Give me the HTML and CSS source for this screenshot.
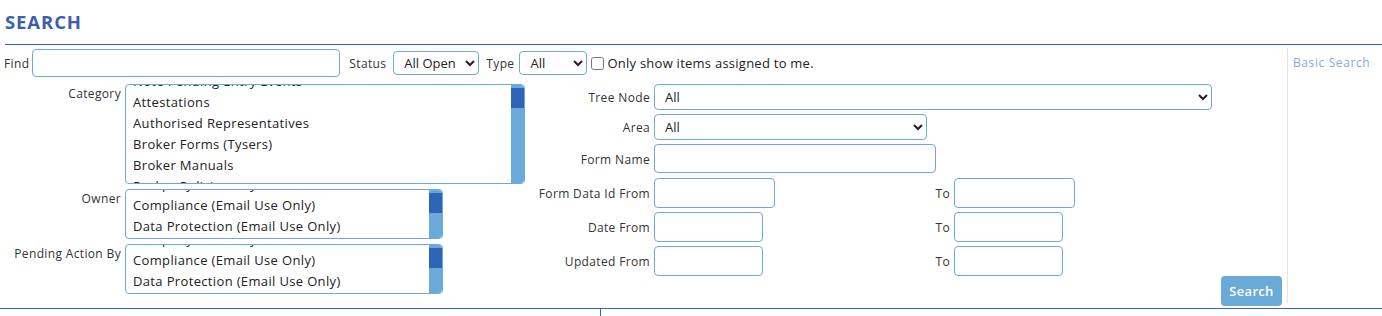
FILE: index.html
```html
<!DOCTYPE html>
<html lang="en">
<head>
  <meta charset="UTF-8" />
  <title>Search</title>
  <link rel="stylesheet" href="styles.css">
</head>
<body>
  <!-- Header -->
  <h1 class="page-title">SEARCH</h1>

  <div class="search-wrap">
    <!-- Search form -->
    <form class="search-form">
      <div class="top-row">
        <label class="lbl">Find</label>
        <input type="text" class="fld find-box" />
        <label class="lbl status-lbl">Status</label>
        <select class="fld sel status-sel"><option>All Open</option></select>
        <label class="lbl type-lbl">Type</label>
        <select class="fld sel type-sel"><option>All</option></select>
        <input type="checkbox" class="chk" />
        <span class="chk-text">Only show items assigned to me.</span>
      </div>

      <div class="body-cols">
        <!-- Left: list boxes -->
        <div class="left-col">
          <div class="list-row">
            <label class="lbl side-lbl">Category</label>
            <div class="listbox cat-box">
              <ul class="items" style="margin-top:-14px">
                <li>Note Pending Entry Events</li>
                <li>Attestations</li>
                <li>Authorised Representatives</li>
                <li>Broker Forms (Tysers)</li>
                <li>Broker Manuals</li>
                <li>Broker Policies</li>
              </ul>
              <div class="scroll"><div class="thumb"></div></div>
            </div>
          </div>
          <div class="list-row">
            <label class="lbl side-lbl">Owner</label>
            <div class="listbox small-box">
              <ul class="items" style="margin-top:-16px">
                <li>Company Secretary</li>
                <li>Compliance (Email Use Only)</li>
                <li>Data Protection (Email Use Only)</li>
              </ul>
              <div class="scroll"><div class="thumb"></div></div>
            </div>
          </div>
          <div class="list-row">
            <label class="lbl side-lbl">Pending Action By</label>
            <div class="listbox small-box">
              <ul class="items" style="margin-top:-16px">
                <li>Company Secretary</li>
                <li>Compliance (Email Use Only)</li>
                <li>Data Protection (Email Use Only)</li>
              </ul>
              <div class="scroll"><div class="thumb"></div></div>
            </div>
          </div>
        </div>

        <!-- Right: fields -->
        <div class="right-col">
          <div class="field-grid">
            <label class="lbl">Tree Node</label>
            <select class="fld sel tree-sel span3"><option>All</option></select>

            <label class="lbl">Area</label>
            <select class="fld sel area-sel span3"><option>All</option></select>

            <label class="lbl">Form Name</label>
            <input type="text" class="fld name-box span3" />

            <label class="lbl">Form Data Id From</label>
            <div class="cell"><input type="text" class="fld id-box" /></div>
            <label class="lbl">To</label>
            <input type="text" class="fld id-box" />

            <label class="lbl">Date From</label>
            <div class="cell"><input type="text" class="fld date-box" /></div>
            <label class="lbl">To</label>
            <input type="text" class="fld date-box" />

            <label class="lbl">Updated From</label>
            <div class="cell"><input type="text" class="fld date-box" /></div>
            <label class="lbl">To</label>
            <input type="text" class="fld date-box" />
          </div>
          <div class="btn-row">
            <button type="button" class="btn-search">Search</button>
          </div>
        </div>
      </div>
    </form>

    <!-- Side links -->
    <aside class="side-links">
      <a href="#">Basic Search</a>
    </aside>
  </div>

  <!-- Results start -->
  <div class="results-bar"><div class="results-col"></div></div>
</body>
</html>
```

FILE: styles.css
```css
body { margin: 0; font-family: "Open Sans", "Liberation Sans", sans-serif; color: #222; background: #fff; letter-spacing: 0.35px; }
.page-title {
  margin: 0 0 0 5px;
  padding: 11px 0 11px 0;
  font-size: 18.5px;
  font-weight: bold;
  color: #3b5fae;
  border-bottom: 1.5px solid #2e67b8;
  line-height: 22px;
  letter-spacing: 0.9px;
}
.search-wrap { display: flex; padding-top: 3px; }
.search-form { flex: 1; padding: 1px 5px 0 4px; }
.side-links {
  width: 89px;
  border-left: 1px solid #e3e3e3;
  padding: 2px 0 0 5px;
  margin-bottom: 3px;
}
.side-links a { color: #86a9da; font-size: 12px; text-decoration: none; letter-spacing: 0.6px; }

.lbl { font-size: 12px; color: #333; }
.fld {
  font-family: inherit;
  font-size: 13px;
  color: #222;
  border: 1px solid #6fa8dc;
  border-radius: 4px;
  background: #fff;
  box-sizing: border-box;
  margin: 0;
}
.sel { padding: 0 4px 0 6px; }

/* Top row */
.top-row { display: flex; align-items: center; height: 28px; }
.find-box { width: 308px; height: 28px; margin-left: 3px; }
.status-lbl { margin-left: 9px; }
.status-sel { width: 86px; height: 24px; margin-left: 7px; }
.type-lbl { margin-left: 7px; }
.type-sel { width: 68px; height: 24px; margin-left: 5px; }
.chk { width: 13px; height: 13px; margin: 0 0 0 4px; }
.chk-text { font-size: 13px; margin-left: 3px; letter-spacing: 0.25px; }

/* Columns */
.body-cols { display: flex; margin-top: 7px; }
.left-col { width: 521px; display: flex; flex-direction: column; gap: 5px; }
.list-row { display: flex; gap: 4px; margin-left: -4px; }
.side-lbl { width: 121px; text-align: right; padding-top: 1px; }

.listbox {
  display: flex;
  border: 1px solid #6fa8dc;
  border-radius: 4px;
  overflow: hidden;
  box-sizing: border-box;
}
.cat-box { width: 400px; height: 100px; }
.small-box { width: 318px; height: 50px; }
.items {
  flex: 1;
  list-style: none;
  margin: 0;
  padding: 0 0 0 7px;
  font-size: 13px;
  line-height: 21px;
}
.scroll { width: 13px; background: #6aaad8; border-radius: 0 3px 3px 0; }
.thumb { height: 20px; margin-top: 3px; background: #2e64b6; }

.right-col { flex: 1; display: flex; flex-direction: column; }
.field-grid {
  display: grid;
  grid-template-columns: 120px 276px 16px auto;
  column-gap: 4px;
  row-gap: 4px;
  align-items: center;
  margin-left: 5px;
}
.field-grid .lbl { text-align: right; white-space: nowrap; }
.span3 { grid-column: 2 / 5; }
.tree-sel { width: 558px; height: 26px; }
.area-sel { width: 273px; height: 26px; }
.name-box { width: 282px; height: 29px; margin-bottom: 1px; }
.id-box { width: 121px; height: 30px; }
.date-box { width: 109px; height: 30px; }

.btn-row { display: flex; justify-content: flex-end; margin-top: 0; }
.btn-search {
  background: #6aaad8;
  color: #fff;
  border: none;
  border-radius: 4px;
  width: 61px;
  height: 30px;
  font-family: inherit;
  font-size: 13px;
  font-weight: 600;
  letter-spacing: 0.3px;
}

.results-bar { border-top: 1.5px solid #2e67b8; height: 10px; margin-top: 2px; }
.results-col { margin-left: 600px; border-left: 1px solid #2e67b8; height: 10px; }
```
